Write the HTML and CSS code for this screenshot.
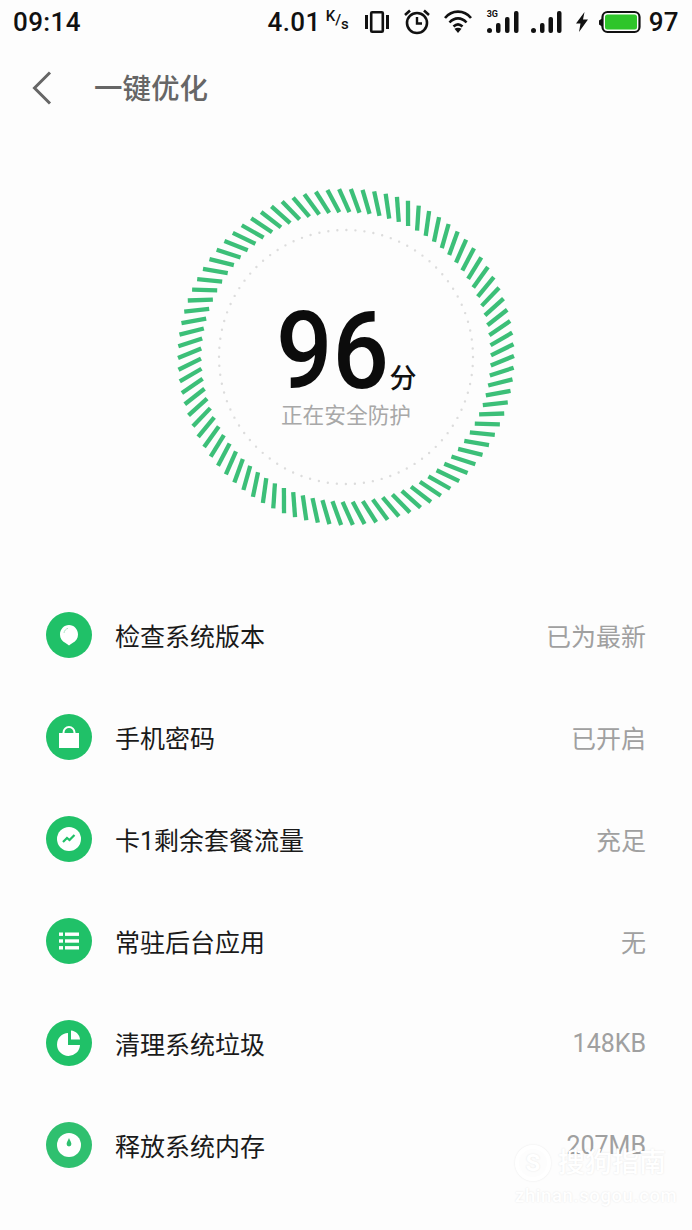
FILE: index.html
```html
<!DOCTYPE html>
<html lang="zh">
<head>
  <meta charset="UTF-8">
  <title>一键优化</title>
  <meta name="viewport" content="width=device-width, initial-scale=1.0">
  <link rel="stylesheet" href="styles.css">
</head>
<body>

<div class="statusbar">
  <span class="clock">09:14</span>
  <div class="status-right">
    <span class="speed">4.01</span>
    <span class="speed-unit"><span class="unit-k">K</span>/<span class="unit-s">s</span></span>
    <!-- vibrate -->
    <svg class="st-vibrate" width="24" height="24" viewBox="0 0 24 24">
      <rect x="0" y="5" width="3" height="14" fill="#111"/>
      <rect x="21" y="5" width="3" height="14" fill="#111"/>
      <rect x="6.2" y="2.2" width="11.6" height="19.6" rx="1" fill="none" stroke="#111" stroke-width="2.6"/>
    </svg>
    <!-- alarm -->
    <svg class="st-alarm" width="26" height="26" viewBox="0 0 26 26">
      <circle cx="13" cy="14" r="10" fill="none" stroke="#111" stroke-width="2.6"/>
      <path d="M13 8v6.5h5" fill="none" stroke="#111" stroke-width="2.4"/>
      <path d="M1 6l5-4.5M25 6l-5-4.5" stroke="#111" stroke-width="2.6"/>
    </svg>
    <!-- wifi -->
    <svg class="st-wifi" width="28" height="24" viewBox="0 0 28 24">
      <path d="M1 8C8-.5 20-.5 27 8M5.500 12.500c5-5.500 12-5.500 17 0M9.500 16.500c3-2.800 6-2.800 9 0" fill="none" stroke="#111" stroke-width="2.600"/>
      <path d="M14 23l-3.500-4.200c2.200-1.300 4.800-1.300 7 0z" fill="#111"/>
    </svg>
    <!-- 3G signal -->
    <div class="st-signal st-signal-3g">
      <span class="net">3G</span>
      <svg width="32" height="24" viewBox="0 0 32 24">
        <rect x="0" y="18" width="5" height="5" rx="2.500" fill="#111"/>
        <rect x="9" y="13" width="4.500" height="10" rx="2" fill="#111"/>
        <rect x="18" y="7" width="4.500" height="16" rx="2" fill="#111"/>
        <rect x="27" y="1" width="4.500" height="22" rx="2" fill="#111"/>
      </svg>
    </div>
    <!-- second signal -->
    <svg class="st-signal2" width="31" height="24" viewBox="0 0 31 24">
      <rect x="0" y="18" width="5" height="5" rx="2.500" fill="#111"/>
      <rect x="9" y="13" width="4.500" height="10" rx="2" fill="#111"/>
      <rect x="17.500" y="7" width="4.500" height="16" rx="2" fill="#111"/>
      <rect x="26" y="1" width="4.500" height="22" rx="2" fill="#111"/>
    </svg>
    <!-- charging bolt -->
    <svg class="st-bolt" width="12" height="20" viewBox="0 0 12 20">
      <path d="M8.500 0L0 11.500h4.500L3 20l9-12.500H7z" fill="#111"/>
    </svg>
    <!-- battery -->
    <svg class="st-battery" width="42" height="24" viewBox="0 0 42 24">
      <path d="M3 8.500L0 10.500v4l3 2z" fill="#111"/>
      <rect x="3.500" y="2" width="37" height="20" rx="5" fill="#fdfdfd" stroke="#111" stroke-width="2.200"/>
      <rect x="6" y="4.500" width="32" height="15" rx="2.500" fill="#2ec52a"/>
    </svg>
    <span class="level">97</span>
  </div>
</div>

<div class="titlebar">
  <svg class="back" width="20" height="34" viewBox="0 0 20 34">
    <path d="M18 1.500L2.500 17 18 32.500" fill="none" stroke="#666" stroke-width="3"/>
  </svg>
  <h1>一键优化</h1>
</div>

<div class="hero">
  <svg class="dial" id="dial" width="340" height="340" viewBox="0 0 340 340">
    <circle class="dots" cx="170" cy="170" r="127"/>
  </svg>
  <div class="score">
    <div class="score-line"><span class="num">96</span><span class="unit">分</span></div>
    <div class="score-note">正在安全防护</div>
  </div>
</div>

<ul class="checks">
  <li class="check">
    <svg class="ico" width="46" height="46" viewBox="0 0 46 46">
      <circle cx="23" cy="23" r="23" fill="#20c168"/>
      <path d="M23 33.500c-1-1-2.200-1.500-3.500-2.400C16 29 14 26.500 14 22.500 14 17.200 18 13 23 13s9 4.200 9 9.500c0 4-2 6.500-5.500 8.600-1.300.9-2.500 1.400-3.500 2.400z" fill="#fff"/>
      <path d="M18 21c.3-2.400 1.800-4 4-4.700" fill="none" stroke="#a9e5c4" stroke-width="1"/>
    </svg>
    <span class="name">检查系统版本</span>
    <span class="state">已为最新</span>
  </li>
  <li class="check">
    <svg class="ico" width="46" height="46" viewBox="0 0 46 46">
      <circle cx="23" cy="23" r="23" fill="#20c168"/>
      <path d="M17.500 20.500v-2a5.500 5.500 0 0 1 11 0v2z" fill="#20c168" stroke="#fff" stroke-width="2"/>
      <rect x="13" y="19" width="20" height="15" fill="#fff"/>
    </svg>
    <span class="name">手机密码</span>
    <span class="state">已开启</span>
  </li>
  <li class="check">
    <svg class="ico" width="46" height="46" viewBox="0 0 46 46">
      <circle cx="23" cy="23" r="23" fill="#20c168"/>
      <circle cx="23" cy="23" r="12" fill="#fff"/>
      <path d="M17 26l4-4 2.500 2 5-5" fill="none" stroke="#20c168" stroke-width="2.200"/>
    </svg>
    <span class="name">卡1剩余套餐流量</span>
    <span class="state">充足</span>
  </li>
  <li class="check">
    <svg class="ico" width="46" height="46" viewBox="0 0 46 46">
      <circle cx="23" cy="23" r="23" fill="#20c168"/>
      <g fill="#fff">
        <rect x="13" y="14.500" width="4" height="3.400"/>
        <rect x="19" y="14.500" width="14" height="3.400"/>
        <rect x="13" y="21.300" width="4" height="3.400"/>
        <rect x="19" y="21.300" width="14" height="3.400"/>
        <rect x="13" y="28.100" width="4" height="3.400"/>
        <rect x="19" y="28.100" width="14" height="3.400"/>
      </g>
    </svg>
    <span class="name">常驻后台应用</span>
    <span class="state">无</span>
  </li>
  <li class="check">
    <svg class="ico" width="46" height="46" viewBox="0 0 46 46">
      <circle cx="23" cy="23" r="23" fill="#20c168"/>
      <path d="M22 13a11.500 11.500 0 1 0 12 12H22z" fill="#fff"/>
      <path d="M25 10.500c4.800.4 8.600 4.200 9 9h-9z" fill="#fff"/>
    </svg>
    <span class="name">清理系统垃圾</span>
    <span class="state">148KB</span>
  </li>
  <li class="check">
    <svg class="ico" width="46" height="46" viewBox="0 0 46 46">
      <circle cx="23" cy="23" r="23" fill="#2fc06f"/>
      <circle cx="23" cy="23" r="12" fill="#fff"/>
      <path d="M23 16c1 2.600 2.400 4.200 2.400 6a2.400 2.400 0 0 1-4.800 0c0-1.800 1.400-3.400 2.400-6z" fill="#2fc06f"/>
    </svg>
    <span class="name">释放系统内存</span>
    <span class="state">207MB</span>
  </li>
</ul>

<div class="mark">
  <div class="mark-top">
    <span class="mark-logo">S</span>
    <span class="mark-name">搜狗指南</span>
  </div>
  <div class="mark-url">zhinan.sogou.com</div>
</div>

<script src="script.js"></script>
</body>
</html>
```

FILE: styles.css
```css
* {
  box-sizing: border-box;
}

html, body {
  height: 1230px;
  overflow: hidden;
}

body {
  position: relative;
  margin: 0;
  background-color: #fdfdfd;
  font-family: Roboto, 'Noto Sans CJK SC', sans-serif;
  color: #111;
}

/* top status row */
.statusbar {
  display: flex;
  justify-content: space-between;
  align-items: center;
  height: 44px;
  padding: 0 13px 0 13px;
}

.clock, .speed, .level {
  font-size: 26px;
  font-weight: 500;
  letter-spacing: 0.4px;
}

.status-right {
  display: flex;
  align-items: center;
}

.speed-unit {
  display: flex;
  width: 24px;
  margin-left: 5px;
  font-size: 15px;
  font-weight: 500;
  line-height: 20px;
}

.unit-k {
  margin-top: -4px;
}

.unit-s {
  margin-top: 4px;
}

.status-right svg {
  display: block;
}

.st-vibrate { margin-left: 15px; }
.st-alarm { margin-left: 15px; }
.st-wifi { margin-left: 14px; }
.st-signal-3g { margin-left: 15px; }
.st-signal2 { margin-left: 12px; }
.st-bolt { margin-left: 14px; }
.st-battery { margin-left: 11px; }
.level { margin-left: 8px; }

.st-signal {
  position: relative;
}

.net {
  position: absolute;
  left: 0;
  top: -1px;
  font-size: 9px;
  font-weight: 700;
  line-height: 10px;
}

.titlebar {
  display: flex;
  align-items: center;
  height: 88px;
  padding-left: 32px;
}

h1 {
  margin: 0 0 3px 42px;
  font-size: 28.5px;
  font-weight: 500;
  color: #666;
}

/* score dial: ring and text share one grid cell */
.hero {
  display: grid;
  justify-items: center;
  margin: 55px 0 57px;
}

.dial, .score {
  grid-area: 1 / 1;
}

.dial {
  display: block;
}

.dots {
  fill: none;
  stroke: #dcdcdc;
  stroke-width: 2.4;
  stroke-linecap: round;
  stroke-dasharray: 0 9.07;
}

.tick {
  stroke: #3cbf78;
  stroke-width: 4.3;
}

.score {
  display: flex;
  flex-direction: column;
  align-items: center;
  padding-top: 119px;
}

.score-line {
  display: flex;
  align-items: baseline;
  height: 90px;
}

/* the dial digits run narrower than the font's own */
.num {
  display: block;
  width: 112px;
  font-size: 108px;
  font-weight: 500;
  line-height: 90px;
  color: #0c0c0c;
  transform: scaleX(0.92);
  transform-origin: left center;
}

.unit {
  margin-left: 2px;
  font-size: 27px;
  font-weight: 500;
  color: #111;
}

.score-note {
  margin-top: 5px;
  font-size: 21.7px;
  line-height: 30px;
  color: #a8a8a8;
}

/* check results */
.checks {
  margin: 0;
  padding: 0 46px;
  list-style: none;
}

.check {
  display: flex;
  align-items: center;
  height: 102px;
}

.ico {
  flex: none;
  display: block;
}

.name {
  margin-left: 23px;
  font-size: 25px;
  color: #1a1a1a;
}

.state {
  margin-left: auto;
  font-size: 25px;
  color: #a0a0a0;
}

/* translucent site mark in the corner */
.mark {
  position: absolute;
  left: 515px;
  top: 1145px;
  color: #fff;
  text-shadow: 0 0 2px rgba(0, 0, 0, 0.1);
}

.mark-top {
  display: flex;
  align-items: center;
}

.mark-logo {
  width: 36px;
  height: 36px;
  border: 4px solid rgba(255, 255, 255, 0.9);
  border-radius: 50%;
  box-shadow: 0 0 2px rgba(0, 0, 0, 0.1);
  font-size: 24px;
  font-weight: 700;
  line-height: 28px;
  text-align: center;
}

.mark-name {
  margin-left: 7px;
  font-size: 27px;
  font-weight: 500;
  line-height: 36px;
}

.mark-url {
  margin-top: 4px;
  font-size: 18.5px;
  font-weight: 500;
  letter-spacing: 0.6px;
  line-height: 22px;
}
```

FILE: script.js
```js
// Draws the slanted ticks of the score ring
const dial = document.getElementById('dial');
const count = 90;
const outer = 168;
const inner = 145;
const slant = 1.85 * Math.PI / 180;
const phase = 1.5 * Math.PI / 180;

for (let i = 0; i < count; i++) {
  const a = i / count * Math.PI * 2 + phase;
  const line = document.createElementNS('http://www.w3.org/2000/svg', 'line');
  line.setAttribute('class', 'tick');
  line.setAttribute('x1', 170 + outer * Math.cos(a - slant));
  line.setAttribute('y1', 170 + outer * Math.sin(a - slant));
  line.setAttribute('x2', 170 + inner * Math.cos(a + slant));
  line.setAttribute('y2', 170 + inner * Math.sin(a + slant));
  dial.appendChild(line);
}
```
